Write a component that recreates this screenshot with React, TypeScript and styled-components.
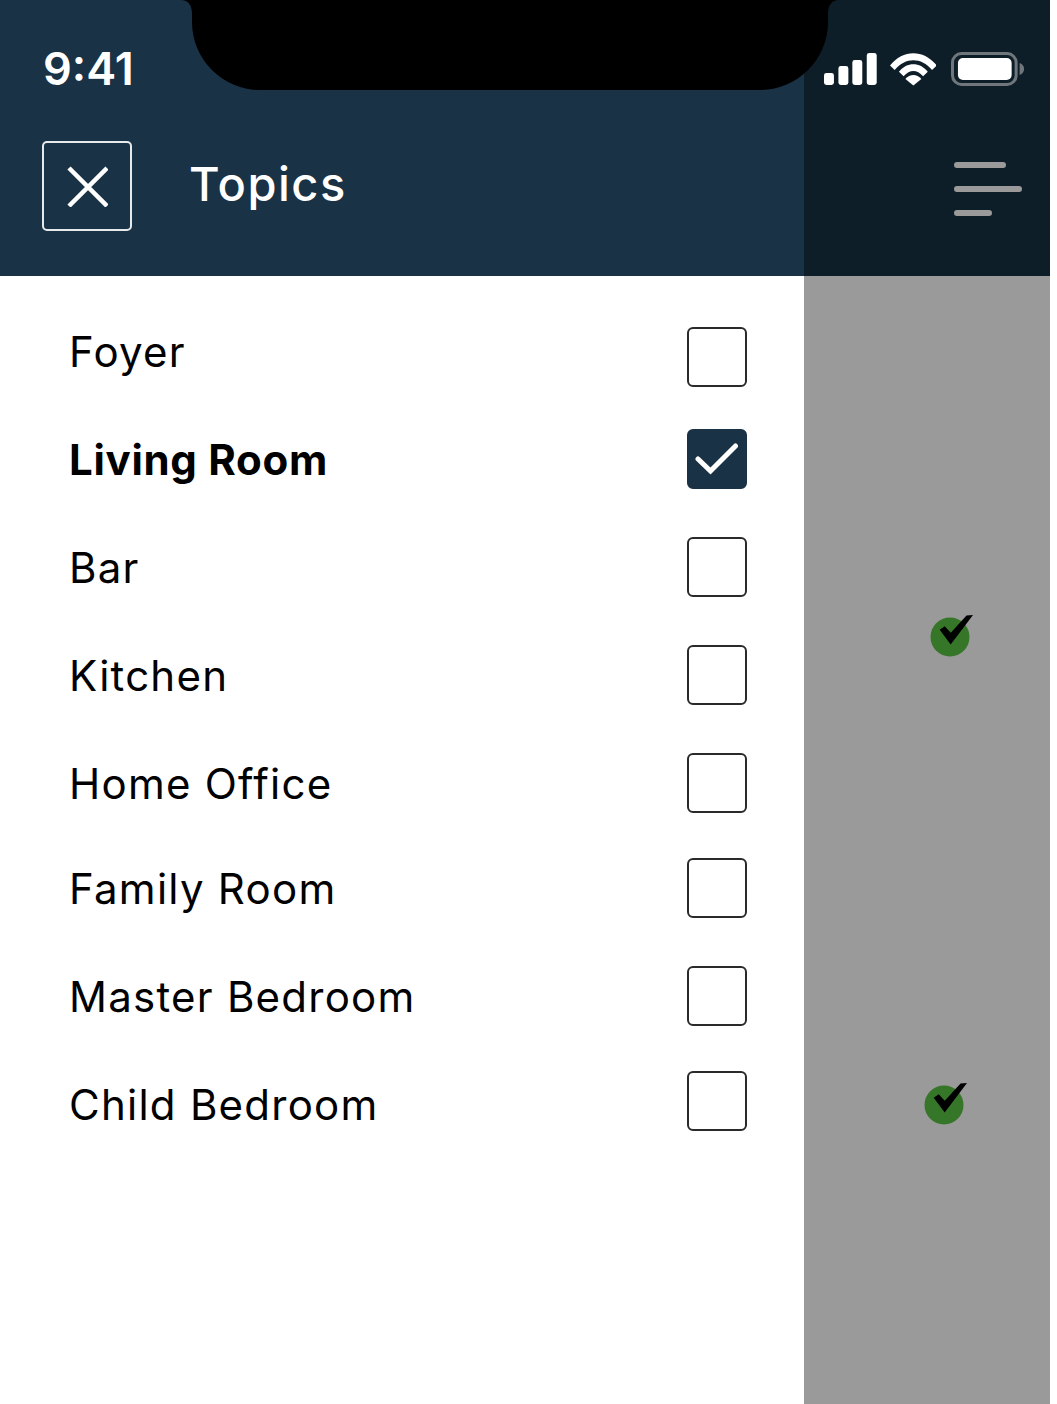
import React from "react";
import styled, { createGlobalStyle } from "styled-components";

const Global = createGlobalStyle`
  html, body { margin: 0; padding: 0; background: #fff; }
  body { font-family: "Inter", "Noto Sans", sans-serif; }
`;

const Screen = styled.div`
  position: relative;
  display: flex;
  width: 1050px;
  height: 1404px;
  overflow: hidden;
  background: #fff;
`;

const Panel = styled.div`
  width: 804px;
  display: flex;
  flex-direction: column;
`;

const PanelHeader = styled.header`
  height: 276px;
  box-sizing: border-box;
  background: #1a3245;
  color: #fff;
  padding: 42px 0 0 42px;
  display: flex;
  flex-direction: column;
`;

const Time = styled.div`
  font-size: 45px;
  line-height: 54px;
  font-weight: 600;
  letter-spacing: 0;
  margin-left: 1px;
`;

const TitleRow = styled.div`
  display: flex;
  align-items: center;
  gap: 57px;
  margin-top: 45px;
`;

const CloseButton = styled.button`
  width: 90px;
  height: 90px;
  box-sizing: border-box;
  padding: 0;
  background: transparent;
  border: 2px solid #e6eaed;
  border-radius: 5px;
  display: flex;
  align-items: center;
  justify-content: center;
`;

const Title = styled.h1`
  margin: -4px 0 0;
  font-size: 47px;
  line-height: 60px;
  font-weight: 500;
  letter-spacing: 1.5px;
`;

const List = styled.ul`
  list-style: none;
  margin: 0;
  padding: 46px 57px 0 69px;
`;

const Row = styled.li<{ $pitch: number }>`
  display: flex;
  justify-content: space-between;
  height: ${(p) => p.$pitch}px;
`;

const Label = styled.span<{ $bold?: boolean }>`
  font-size: 42px;
  line-height: 60px;
  font-weight: ${(p) => (p.$bold ? 700 : 400)};
  color: #000;
  letter-spacing: ${(p) => (p.$bold ? 0.7 : 1.25)}px;
`;

const Box = styled.span<{ $checked?: boolean; $shift: number }>`
  width: 60px;
  height: 60px;
  margin-top: ${(p) => p.$shift}px;
  box-sizing: border-box;
  border-radius: 6px;
  border: 2px solid ${(p) => (p.$checked ? "#1a3245" : "#2a2a2a")};
  background: ${(p) => (p.$checked ? "#1a3245" : "#fff")};
  display: flex;
  align-items: center;
  justify-content: center;
`;

const Scrim = styled.div`
  position: relative;
  width: 246px;
  background: #9a9a9a;
`;

const ScrimHeader = styled.div`
  height: 276px;
  box-sizing: border-box;
  background: #0e1e28;
  padding: 52px 25px 0 20px;
  display: flex;
  flex-direction: column;
`;

const StatusIcons = styled.div`
  display: flex;
  align-items: flex-start;
  gap: 13px;
`;

const BatteryIcon = styled.svg`
  margin-left: 2px;
`;

const MenuLines = styled.div`
  display: flex;
  flex-direction: column;
  gap: 18px;
  margin: 74px 0 0 130px;
`;

const MenuLine = styled.span<{ $width: number }>`
  display: block;
  width: ${(p) => p.$width}px;
  height: 6px;
  border-radius: 3px;
  background: #9a9a9a;
`;

const Notch = styled.svg`
  position: absolute;
  left: 180px;
  top: 0;
`;

const Badge = styled.svg<{ $x: number; $y: number }>`
  position: absolute;
  left: ${(p) => p.$x}px;
  top: ${(p) => p.$y}px;
`;

const rooms = [
  { name: "Foyer", pitch: 108, shift: 5 },
  { name: "Living Room", pitch: 108, shift: -1, checked: true },
  { name: "Bar", pitch: 108, shift: -1 },
  { name: "Kitchen", pitch: 108, shift: -1 },
  { name: "Home Office", pitch: 105, shift: -1 },
  { name: "Family Room", pitch: 108, shift: -1 },
  { name: "Master Bedroom", pitch: 108, shift: -1 },
  { name: "Child Bedroom", pitch: 108, shift: -4 },
];

const DoneBadge = ({ x, y }: { x: number; y: number }) => (
  <Badge $x={x} $y={y} width="50" height="50" viewBox="-25 -25 50 50">
    <circle cx="0" cy="0" r="19.5" fill="#367628" />
    <path d="M-10.3 -7.3 L-5.3 -10.8 L0.8 -4.2 L16.5 -21.5 L23 -22 L0.7 7.6 Z" fill="#000" />
  </Badge>
);

export default function App() {
  return (
    <Screen>
      <Global />
      <Panel>
        <PanelHeader>
          <Time>9:41</Time>
          <TitleRow>
            <CloseButton aria-label="Close">
              <svg width="42" height="42" viewBox="0 0 42 42">
                <path d="M2 2 L40 40 M40 2 L2 40" stroke="#fff" strokeWidth="4.5" fill="none" transform="translate(1 1)" />
              </svg>
            </CloseButton>
            <Title>Topics</Title>
          </TitleRow>
        </PanelHeader>
        <List>
          {rooms.map((r) => (
            <Row key={r.name} $pitch={r.pitch}>
              <Label $bold={r.checked}>{r.name}</Label>
              <Box $checked={r.checked} $shift={r.shift}>
                {r.checked && (
                  <svg width="44" height="32" viewBox="0 0 44 32">
                    <path d="M3 16 L15.5 28 L40.5 3" stroke="#fff" strokeWidth="5" strokeLinecap="round" fill="none" />
                  </svg>
                )}
              </Box>
            </Row>
          ))}
        </List>
      </Panel>
      <Scrim>
        <ScrimHeader>
          <StatusIcons>
            <svg width="53" height="34" viewBox="0 0 53 34">
              <rect x="0" y="21" width="10" height="12" rx="2.5" fill="#fff" />
              <rect x="14.5" y="14" width="10" height="19" rx="2.5" fill="#fff" />
              <rect x="28.5" y="8" width="10" height="25" rx="2.5" fill="#fff" />
              <rect x="43" y="1" width="10" height="32" rx="2.5" fill="#fff" />
            </svg>
            <svg width="47" height="34" viewBox="0 0 47 34">
              <path d="M0 13.5 C13 -3 34 -3 47 13.5 L42.3 18 C31.5 5 15.5 5 4.7 18 Z" fill="#fff" />
              <path d="M9 22 C17 12 30 12 38 22 L33.3 26.5 C27 19.5 20 19.5 13.7 26.5 Z" fill="#fff" transform="translate(0 -2.2)" />
              <path d="M15.5 27 C20 21.6 27 21.6 31.5 27 L23.5 33.5 Z" fill="#fff" />
            </svg>
            <BatteryIcon width="74" height="36" viewBox="0 0 74 36">
              <rect x="1.5" y="1.5" width="64" height="31" rx="9" fill="none" stroke="#6f777c" strokeWidth="3" />
              <rect x="7" y="6" width="54" height="22" rx="5" fill="#fff" />
              <path d="M69 11 C72 12 73.5 14.5 73.5 17 C73.5 19.5 72 22 69 23 Z" fill="#6f777c" />
            </BatteryIcon>
          </StatusIcons>
          <MenuLines>
            <MenuLine $width={52} />
            <MenuLine $width={68} />
            <MenuLine $width={38} />
          </MenuLines>
        </ScrimHeader>
        <DoneBadge x={120.5} y={612} />
        <DoneBadge x={114.5} y={1080} />
      </Scrim>
      <Notch width="660" height="92" viewBox="180 0 660 92">
        <path d="M181 0 C188 0 192 5 192 14 L192 22 A68 68 0 0 0 260 90 L760 90 A68 68 0 0 0 828 22 L828 14 C828 5 832 0 839 0 Z" fill="#000" />
      </Notch>
    </Screen>
  );
}
